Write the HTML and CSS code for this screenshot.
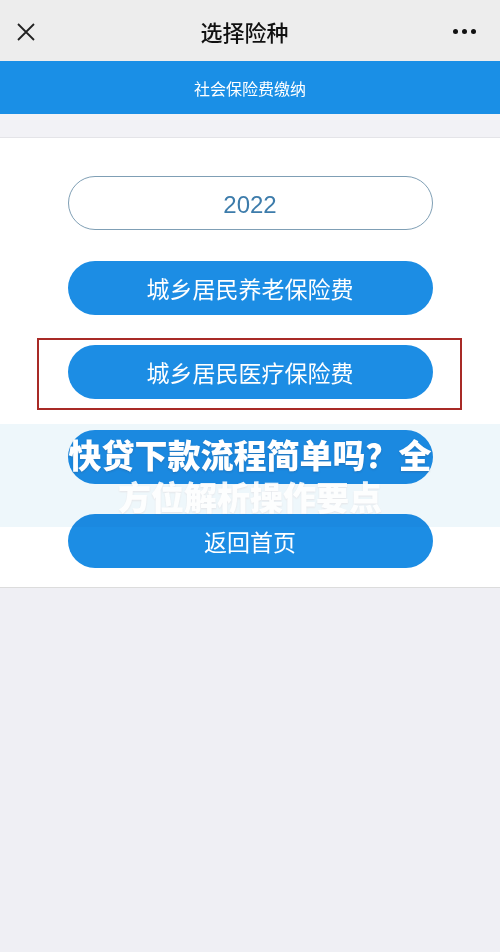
FILE: index.html
```html
<!DOCTYPE html>
<html lang="zh-CN">
<head>
    <meta charset="UTF-8">
    <meta name="viewport" content="width=device-width, initial-scale=1.0">
    <title>选择险种</title>
    <link rel="stylesheet" href="styles.css">
</head>
<body>
    <div class="nav">
        <svg class="nav-close" width="20" height="20" viewBox="0 0 20 20">
            <path d="M2 2 L18 18 M18 2 L2 18" stroke="#222" stroke-width="1.8" fill="none"/>
        </svg>
        <h1 class="nav-title">选择险种</h1>
        <div class="nav-more"><i></i><i></i><i></i></div>
    </div>

    <div class="banner">社会保险费缴纳</div>
    <div class="gap"></div>

    <div class="panel">
        <div class="btn btn-year">2022</div>
        <div class="btn">城乡居民养老保险费</div>
        <div class="btn btn-marked">城乡居民医疗保险费</div>
        <div class="btn"></div>
        <div class="btn">返回首页</div>
    </div>

    <div class="promo-tint"></div>
    <div class="promo-text">
        <div class="promo-line">快贷下款流程简单吗？全</div>
        <div class="promo-line promo-faint">方位解析操作要点</div>
    </div>
</body>
</html>
```

FILE: styles.css
```css
body {
    margin: 0;
    background: #efeff4;
    font-family: "Noto Sans CJK SC", "Noto Sans", sans-serif;
    min-height: 952px;
    position: relative;
}

.nav {
    height: 61px;
    background: #ededed;
    display: flex;
    align-items: center;
    justify-content: space-between;
    padding: 0 24px 0 16px;
}

.nav-close {
    margin-top: 2px;
}

.nav-title {
    margin: 0;
    font-size: 22px;
    font-weight: 500;
    color: #111;
    margin-top: 1px;
}

.nav-more {
    display: flex;
    gap: 4px;
    margin-top: 2px;
}

.nav-more i {
    width: 5px;
    height: 5px;
    border-radius: 50%;
    background: #111;
}

.banner {
    height: 53px;
    background: #1a8fe6;
    color: #fff;
    font-size: 16px;
    display: flex;
    align-items: center;
    justify-content: center;
}

.gap {
    height: 23px;
    background: #f2f2f6;
    border-bottom: 1px solid #e4e4e8;
}

.panel {
    background: #fff;
    border-bottom: 1px solid #dcdcdc;
    display: flex;
    flex-direction: column;
    align-items: center;
    gap: 30.5px;
    padding: 38px 0 19px;
}

.btn {
    width: 365px;
    height: 54px;
    border-radius: 27px;
    background: #1c8de4;
    color: #fff;
    font-size: 23px;
    display: flex;
    align-items: center;
    justify-content: center;
    box-sizing: border-box;
}

.btn-year {
    background: #fff;
    border: 1px solid #7f9fb5;
    color: #3d7cab;
    font-family: "Liberation Sans", Arial, sans-serif;
    font-size: 24px;
    padding-top: 4px;
}

.btn-marked {
    position: relative;
}

/* red frame drawn round the chosen option */
.btn-marked::after {
    content: "";
    position: absolute;
    top: -7px;
    left: -31px;
    right: -29px;
    bottom: -11px;
    border: 2px solid #a82a26;
}

.promo-tint {
    position: absolute;
    top: 424px;
    left: 0;
    right: 0;
    height: 103px;
    background: #eef7fb;
    mix-blend-mode: multiply;
}

.promo-text {
    position: absolute;
    top: 433px;
    left: 0;
    right: 0;
    text-align: center;
    color: #fff;
    font-size: 33px;
    font-weight: 900;
}

.promo-line {
    height: 42px;
    line-height: 42px;
    text-shadow: 0 1px 2px rgba(60, 60, 80, 0.25);
}

.promo-faint {
    opacity: 0.9;
    text-shadow: 0 1px 2px rgba(150, 80, 80, 0.12);
}
```
